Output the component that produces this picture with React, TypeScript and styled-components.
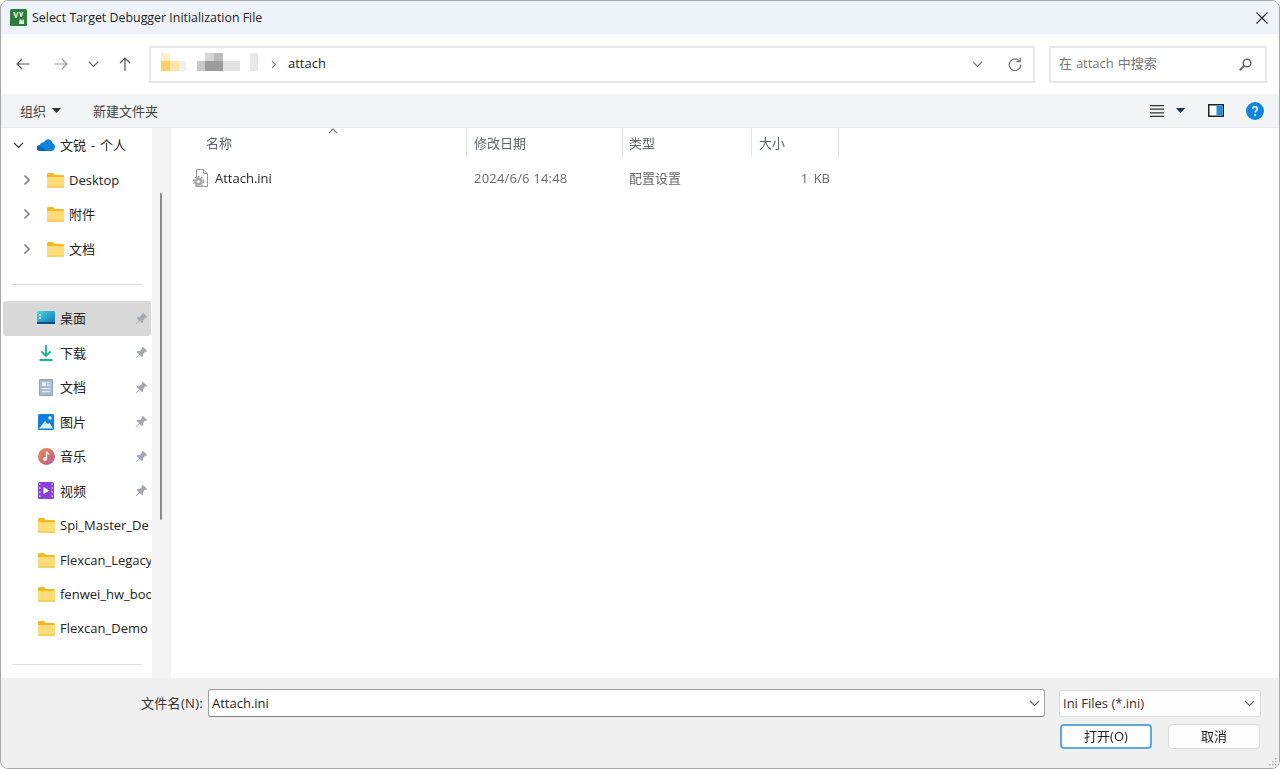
import React from "react";
import styled, { createGlobalStyle } from "styled-components";

const Global = createGlobalStyle`
  html, body { margin: 0; padding: 0; background: #fff; }
  body { font-family: "Open Sans", "Noto Sans CJK SC", sans-serif; font-size: 13px; overflow: hidden; }
  * { box-sizing: border-box; }
`;

const Win = styled.div`
  width: 1280px; height: 769px; display: flex; flex-direction: column;
  border: 1px solid #a8a8a8; border-radius: 8px; overflow: hidden; background: #fff;
  filter: blur(0.4px);
`;
const TitleBar = styled.div`
  height: 33px; flex: none; display: flex; align-items: center; background: #eef3f9;
  padding: 0 9px; gap: 5px; color: #1c1c1c; font-size: 12.4px;
`;
const TitleText = styled.span`flex: 1; white-space: nowrap;`;
const NavBar = styled.div`
  height: 60px; flex: none; display: flex; align-items: center; padding: 0 12px 0 0; background: #fff;
`;
const NavBtn = styled.div<{ $w: number }>`
  width: ${p => p.$w}px; flex: none; display: flex; justify-content: center; align-items: center;
`;
const Address = styled.div`
  width: 886px; height: 37px; margin-left: 10px; flex: none; display: flex; align-items: center;
  border: 2px solid #e8e8e8; background: #fff; color: #1c1c1c; font-size: 13px;
`;
const Crumb = styled.span`margin-left: 11px; flex: 1; padding-bottom: 3px;`;
const Sep = styled.span`margin-left: 8px; display: flex;`;
const AddrIcon = styled.span<{ $mr: number }>`display: flex; margin-right: ${p => p.$mr}px;`;
const Search = styled.div`
  width: 218px; height: 37px; margin-left: 14px; flex: none; display: flex; align-items: center; justify-content: space-between;
  border: 2px solid #e8e8e8; padding: 0 13px 0 8px; color: #777; font-size: 13px;
`;
const SearchText = styled.span`padding-bottom: 3px; word-spacing: .5px;`;
const Command = styled.div`
  height: 34px; flex: none; display: flex; align-items: center; background: #f3f4f6;
  border-bottom: 1px solid #e9e9e9; padding: 0 15px 0 19px; color: #444; font-size: 13px;
`;
const CmdGroup = styled.div`display: flex; align-items: center; gap: 6px; padding-bottom: 1px;`;
const CmdItem = styled.span<{ $ml?: number }>`margin-left: ${p => p.$ml ?? 0}px; display: flex;`;
const Spacer = styled.div`flex: 1;`;
const Main = styled.div`height: 550px; flex: none; display: flex; background: #fff;`;
const Side = styled.nav`width: 151px; flex: none; overflow: hidden; background: #fff;`;
const Row = styled.div<{ $sel?: boolean; $pl: number }>`
  height: 34.45px; width: 148px; margin-left: 2px; display: flex; align-items: center; position: relative;
  padding-left: ${p => p.$pl}px; border-radius: 3px; background: ${p => (p.$sel ? "#d9d9d9" : "transparent")};
  color: #222; font-size: 13px; white-space: nowrap; overflow: hidden;
`;
const Chev = styled.span<{ $w: number }>`width: ${p => p.$w}px; flex: none; display: flex; align-items: center;`;
const IconWrap = styled.span<{ $mr: number }>`display: flex; flex: none; margin-right: ${p => p.$mr}px;`;
const Label = styled.span<{ $latin?: boolean }>`
  flex: 1; overflow: hidden; word-spacing: 1.500px; padding-bottom: ${p => (p.$latin ? 0 : 1)}px;
`;
const PinWrap = styled.span`display: flex; flex: none; margin-right: 3px;`;
const IconSlot = styled.span`width: 18px; display: flex; justify-content: center;`;
const Divider = styled.div<{ $h: number; $mt?: number; $pt?: number }>`
  height: ${p => p.$h}px; margin-top: ${p => p.$mt ?? 0}px; padding: ${p => p.$pt ?? 0}px 10px 0 11px; display: flex; align-items: center;
  &::after { content: ""; flex: 1; height: 1px; background: #dedede; }
`;
const Track = styled.div`width: 18px; flex: none; background: #f3f3f3; display: flex; justify-content: center;`;
const Thumb = styled.div`width: 2px; height: 327px; margin-top: 65px; background: #8b8b8b; border-radius: 1px;`;
const List = styled.section`flex: 1; position: relative; border-left: 1px solid #f4f4f4;`;
const Cols = `296px 156px 129px 87px`;
const Head = styled.div`display: grid; grid-template-columns: ${Cols}; height: 30px; color: #5c6570; font-size: 13px;`;
const HeadCell = styled.div<{ $pl: number }>`
  display: flex; align-items: center; padding: 0 0 2px ${p => p.$pl}px; border-right: 1px solid #e5e5e5;
`;
const SortCaret = styled.span`position: absolute; left: 157px; top: 0; display: flex;`;
const FileRow = styled.div`display: grid; grid-template-columns: ${Cols}; height: 40px; align-items: center; color: #6b6b6b; font-size: 13px;`;
const NameCell = styled.div`display: flex; align-items: center; padding-left: 22px; color: #262626; gap: 6px;`;
const Cell = styled.div<{ $pl: number }>`padding-left: ${p => p.$pl}px; white-space: nowrap; letter-spacing: .2px;`;
const TypeCell = styled(Cell)`padding-bottom: 2px; letter-spacing: 0;`;
const SizeCell = styled.div`text-align: right; padding-right: 9px; white-space: nowrap; word-spacing: 2px;`;
const Footer = styled.footer`flex: 1; background: #f0f0f0; position: relative; padding: 11px 18px 0 0; display: flex; flex-direction: column; gap: 7px;`;
const FRow = styled.div`display: flex; justify-content: flex-end; align-items: center;`;
const FLabel = styled.label`color: #333; font-size: 13px; margin-right: 5px; letter-spacing: .3px; padding-bottom: 2px;`;
const Input = styled.div`
  width: 837px; height: 28px; background: #fff; border: 1px solid #a0a0a0; border-bottom-color: #7c7c7c; border-radius: 3px;
  display: flex; align-items: center; justify-content: space-between; padding: 0 4px 0 3px; color: #1c1c1c; font-size: 13px;
`;
const Combo = styled.div`
  width: 202px; height: 27px; margin-left: 14px; background: #fdfdfd; border: 1px solid #dcdcdc; border-radius: 3px;
  display: flex; align-items: center; justify-content: space-between; padding: 0 5px 0 3px; color: #333; font-size: 13px;
`;
const Button = styled.button<{ $primary?: boolean }>`
  width: 92px; height: 25px; margin-left: ${p => (p.$primary ? 0 : 16)}px; background: #fdfdfd; padding: 0 0 2px;
  border: ${p => (p.$primary ? "2px solid #5fa8de" : "1px solid #dadada")}; border-radius: 4px;
  color: #1c1c1c; font: 13px "Open Sans", "Noto Sans CJK SC", sans-serif;
`;
const Buttons = styled(FRow)`padding-right: 1px;`;
const Grip = styled.span`position: absolute; right: 1px; bottom: 1px; display: flex;`;

const Folder = ({ w = 18 }: { w?: number }) => (
  <svg width={w} height={w - 2} viewBox="0 0 18 16">
    <path d="M1 2.500C1 1.700 1.600 1 2.500 1H7l2 2h7.500c.8 0 1.500.7 1.500 1.500V6H1z" fill="#f5b81f" />
    <path d="M1 5h17v9.500c0 .8-.7 1.500-1.500 1.500h-14C1.700 16 1 15.300 1 14.500z" fill="#ffdc78" />
    <path d="M1 14.500V15.500h17v-1z" fill="#f2c14e" />
  </svg>
);
const Pin = () => (
  <svg width="13" height="13" viewBox="0 0 13 13" fill="#a3a9ae">
    <path d="M8 .8l4.200 4.200-1 .9-.8-.3-2.300 2.300.1 2.200-1.100 1.100-2.400-2.400L1.200 12.300l-.6-.5 3.400-3.500L1.600 5.900l1.100-1.100 2.200.1L7.200 2.600 6.900 1.800z" />
  </svg>
);
const ChevR = ({ s = 1 }: { s?: number }) => (
  <svg width={8 * s} height={12 * s} viewBox="0 0 8 12" fill="none" stroke="#7f7f7f" strokeWidth="1.600"><path d="M1.500 1.500L6 6l-4.500 4.500" /></svg>
);
const ChevD = ({ c = "#3a3a3a", w = 11 }: { c?: string; w?: number }) => (
  <svg width={w} height="7" viewBox="0 0 11 7" fill="none" stroke={c} strokeWidth="1.200"><path d="M1 1l4.500 4.500L10 1" /></svg>
);
const Cloud = () => (
  <svg width="18" height="12" viewBox="0 0 18 12">
    <path d="M3.500 12C1.500 12 0 10.700 0 9c0-1.600 1.200-2.900 2.900-3.100C3.500 4 5.200 3 7 3.200 8.200 1 10 0 11.500.2c2 .2 3.500 1.700 3.700 3.800C16.800 4.400 18 5.700 18 7.500 18 10 16.500 12 14.500 12z" fill="#1081d8" />
    <path d="M3.500 12C1.500 12 0 10.700 0 9c0-1 .4-1.900 1.200-2.400L11 12z" fill="#0a64b8" />
  </svg>
);
const Desk = () => (
  <svg width="18" height="14" viewBox="0 0 18 14">
    <defs><linearGradient id="dk" x1="0" y1="0" x2="1" y2="1"><stop offset="0" stopColor="#48d6e8" /><stop offset="1" stopColor="#0f6fae" /></linearGradient></defs>
    <rect x="0" y="0" width="18" height="13" rx="1.500" fill="url(#dk)" />
    <rect x="0" y="11" width="18" height="2" fill="#0b4f86" />
    <rect x="2" y="3" width="2" height="1.500" fill="#fff" /><rect x="2" y="6" width="2" height="1.500" fill="#fff" />
  </svg>
);
const Down = () => (
  <svg width="14" height="16" viewBox="0 0 14 16" fill="none" stroke="#13b58c" strokeWidth="1.800"><path d="M7 0v11M2.500 6.500L7 11l4.500-4.500M0.500 15h13" /></svg>
);
const Doc = () => (
  <svg width="14" height="17" viewBox="0 0 14 17">
    <rect width="14" height="17" rx="1" fill="#8ea4bf" /><rect x="1" y="1" width="12" height="15" fill="#a9bad0" />
    <rect x="3" y="3" width="4" height="4" fill="#e8eef5" /><rect x="8" y="3" width="3.500" height="1.200" fill="#e8eef5" /><rect x="8" y="5.500" width="3.500" height="1.200" fill="#e8eef5" />
    <rect x="3" y="9" width="8.500" height="1.200" fill="#e8eef5" /><rect x="3" y="12" width="8.500" height="1.200" fill="#e8eef5" />
  </svg>
);
const Pic = () => (
  <svg width="16" height="16" viewBox="0 0 16 16">
    <rect width="16" height="16" rx="1.500" fill="#0d7fdc" />
    <circle cx="12" cy="4" r="1.700" fill="#fff" />
    <path d="M1 14.500L7 7l3 3 1.500-1.200L15 14.500z" fill="#dff0fd" />
  </svg>
);
const Music = () => (
  <svg width="17" height="17" viewBox="0 0 17 17">
    <defs><linearGradient id="mu" x1="0" y1="0" x2="1" y2="1"><stop offset="0" stopColor="#f18b47" /><stop offset="1" stopColor="#b8589e" /></linearGradient></defs>
    <circle cx="8.500" cy="8.500" r="8.500" fill="url(#mu)" />
    <path d="M8.500 3.500v7" stroke="#fff" strokeWidth="1.300" /><path d="M8.500 3.500c.5 1.800 2.300 1.800 2.800 3" stroke="#fff" strokeWidth="1.100" fill="none" />
    <circle cx="7" cy="11" r="1.900" fill="#fff" />
  </svg>
);
const Video = () => (
  <svg width="16" height="17" viewBox="0 0 16 17">
    <rect width="16" height="17" rx="1.500" fill="#8b3fd9" />
    <path d="M5.500 5v7l6-3.500z" fill="#fff" />
    {[2, 6, 10, 14].map(y => <rect key={y} x="1" y={y - .7} width="1.500" height="1.500" fill="#e3cdfa" />)}
    {[2, 6, 10, 14].map(y => <rect key={y} x="13.500" y={y - .7} width="1.500" height="1.500" fill="#e3cdfa" />)}
  </svg>
);
const AppLogo = () => (
  <svg width="17" height="17" viewBox="0 0 17 17">
    <rect width="17" height="17" rx="1.500" fill="#2f7d3a" />
    <path d="M3 3h2l1 4 1-4h1.500L6.800 9H5.300zM9 3h1.500l.7 3 .7-3h1.500l-1.500 5h-1.400z" fill="#d9ecd9" />
    <path d="M9.500 10.500h2l.5 3 .5-3H14v4.500h-5z" fill="#eaf5ea" />
  </svg>
);
const IniIcon = () => (
  <svg width="16" height="18" viewBox="0 0 16 18">
    <path d="M3.500.5h7l4 4v13h-11z" fill="#fff" stroke="#9c9c9c" />
    <path d="M10.500.5v4h4" fill="#eee" stroke="#9c9c9c" />
    <circle cx="5.500" cy="12.500" r="4.300" fill="#a9a9a9" />
    <circle cx="5.500" cy="12.500" r="5" fill="none" stroke="#9a9a9a" strokeWidth="1.200" strokeDasharray="1.600 1.600" />
    <circle cx="5.500" cy="12.500" r="1.600" fill="#f0f0f0" />
  </svg>
);
const ArrowSvg = styled.svg<{ $flip?: boolean }>`transform: ${p => (p.$flip ? "scaleX(-1)" : "none")};`;
const Arrow = ({ c, flip }: { c: string; flip?: boolean }) => (
  <ArrowSvg $flip={flip} width="14" height="12" viewBox="0 0 14 12" fill="none" stroke={c} strokeWidth="1.200">
    <path d="M13.500 6H1M6 1L1 6l5 5" />
  </ArrowSvg>
);
const Up = () => (
  <svg width="12" height="14" viewBox="0 0 12 14" fill="none" stroke="#555" strokeWidth="1.200"><path d="M6 14V1M1 6l5-5 5 5" /></svg>
);
const MosaicSvg = styled.svg`flex: none;`;
const Mosaic = () => (
  <MosaicSvg width="112" height="33" viewBox="1 0 112 33">
    <rect x="11" y="5" width="9" height="8" fill="#ffefc8" />
    <rect x="11" y="13" width="9" height="10" fill="#ffd062" />
    <rect x="20" y="13" width="9" height="10" fill="#ffe6a8" />
    <rect x="29" y="13" width="7" height="10" fill="#efefef" />
    <rect x="47" y="13" width="8" height="10" fill="#c8c8c8" />
    <rect x="55" y="5" width="9" height="8" fill="#d6d6d6" />
    <rect x="64" y="5" width="9" height="8" fill="#bcbcbc" />
    <rect x="55" y="13" width="18" height="10" fill="#9c9c9c" />
    <rect x="73" y="13" width="17" height="10" fill="#e2e2e2" />
    <rect x="100" y="5" width="8" height="18" fill="#e8e8e8" />
  </MosaicSvg>
);
const Refresh = () => (
  <svg width="14" height="14" viewBox="0 0 14 14" fill="none" stroke="#767676" strokeWidth="1.200">
    <path d="M11.800 4.500A5.800 5.800 0 1 0 12.800 7.500" /><path d="M12.300 .8v3.900H8.400" />
  </svg>
);
const Mag = () => (
  <svg width="13" height="13" viewBox="0 0 13 13" fill="none" stroke="#666" strokeWidth="1.500">
    <circle cx="8" cy="5" r="3.800" /><path d="M5.200 7.800L.8 12.200" strokeWidth="2" />
  </svg>
);
const Lines = () => (
  <svg width="14" height="12" viewBox="0 0 14 12" stroke="#333" strokeWidth="1.200"><path d="M0 .6h14M0 4.200h14M0 7.800h14M0 11.400h14" /></svg>
);
const Caret = ({ c = "#333", w = 9 }: { c?: string; w?: number }) => (
  <svg width={w} height="5" viewBox="0 0 9 5" fill={c}><path d="M0 0h9L4.500 5z" /></svg>
);
const PaneIcon = () => (
  <svg width="16" height="13" viewBox="0 0 16 13">
    <rect x=".75" y=".75" width="14.500" height="11.500" fill="#fff" stroke="#222" strokeWidth="1.500" />
    <rect x="8.500" y="1.500" width="6" height="10" fill="#1b8fe3" />
  </svg>
);
const Help = () => (
  <svg width="18" height="18" viewBox="0 0 18 18">
    <circle cx="9" cy="9" r="9" fill="#0f87e0" />
    <path d="M6.700 7c0-1.500 1-2.300 2.400-2.300S11.400 5.500 11.400 6.800c0 1.800-2.200 1.800-2.200 3.700" fill="none" stroke="#fff" strokeWidth="1.600" />
    <circle cx="9.200" cy="13" r="1" fill="#fff" />
  </svg>
);
const Close = () => (
  <svg width="12" height="12" viewBox="0 0 12 12" stroke="#1a1a1a" strokeWidth="1.100"><path d="M.5.5l11 11M11.500.5l-11 11" /></svg>
);
const GripIcon = () => (
  <svg width="10" height="10" viewBox="0 0 10 10" fill="#b5b5b5">
    {[[7, 1], [4, 4], [7, 4], [1, 7], [4, 7], [7, 7]].map(([x, y]) => <rect key={`${x}${y}`} x={x} y={y} width="1.500" height="1.500" />)}
  </svg>
);

const tree = ["Desktop", "附件", "文档"];
const pinned: [string, React.ReactNode][] = [
  ["桌面", <Desk />], ["下载", <Down />], ["文档", <Doc />], ["图片", <Pic />], ["音乐", <Music />], ["视频", <Video />],
];
const recent = ["Spi_Master_De", "Flexcan_Legacy", "fenwei_hw_boo", "Flexcan_Demo"];

export default function App() {
  return (
    <>
      <Global />
      <Win>
        <TitleBar>
          <AppLogo />
          <TitleText>Select Target Debugger Initialization File</TitleText>
          <AddrIcon $mr={2}><Close /></AddrIcon>
        </TitleBar>
        <NavBar>
          <NavBtn $w={44}><Arrow c="#555" /></NavBtn>
          <NavBtn $w={31}><Arrow c="#9a9a9a" flip /></NavBtn>
          <NavBtn $w={35}><ChevD c="#666" /></NavBtn>
          <NavBtn $w={28}><Up /></NavBtn>
          <Address>
            <Mosaic />
            <Sep><ChevR s={0.75} /></Sep>
            <Crumb>attach</Crumb>
            <AddrIcon $mr={25}><ChevD c="#777" /></AddrIcon>
            <AddrIcon $mr={11}><Refresh /></AddrIcon>
          </Address>
          <Search>
            <SearchText>在 attach 中搜索</SearchText>
            <Mag />
          </Search>
        </NavBar>
        <Command>
          <CmdGroup>组织<Caret /></CmdGroup>
          <CmdItem $ml={32}>新建文件夹</CmdItem>
          <Spacer />
          <Lines />
          <CmdItem $ml={12}><Caret c="#1f3556" /></CmdItem>
          <CmdItem $ml={23}><PaneIcon /></CmdItem>
          <CmdItem $ml={22}><Help /></CmdItem>
        </Command>
        <Main>
          <Side>
            <Row $pl={10}>
              <Chev $w={24}><ChevD /></Chev>
              <IconWrap $mr={5}><Cloud /></IconWrap>
              <Label>文锐 - 个人</Label>
            </Row>
            {tree.map(t => (
              <Row key={t} $pl={20}>
                <Chev $w={23}><ChevR /></Chev>
                <IconWrap $mr={5}><Folder /></IconWrap>
                <Label $latin={t === "Desktop"}>{t}</Label>
              </Row>
            ))}
            <Divider $h={35.500} $pt={2} />
            {pinned.map(([t, icon], i) => (
              <Row key={t} $sel={i === 0} $pl={34}>
                <IconWrap $mr={5}><IconSlot>{icon}</IconSlot></IconWrap>
                <Label>{t}</Label>
                <PinWrap><Pin /></PinWrap>
              </Row>
            ))}
            {recent.map(t => (
              <Row key={t} $pl={34}>
                <IconWrap $mr={5}><Folder /></IconWrap>
                <Label $latin>{t}</Label>
              </Row>
            ))}
            <Divider $h={2} $mt={18} />
          </Side>
          <Track><Thumb /></Track>
          <List>
            <SortCaret>
              <svg width="10" height="6" viewBox="0 0 10 6" fill="none" stroke="#777" strokeWidth="1.100"><path d="M1 5l4-4 4 4" /></svg>
            </SortCaret>
            <Head>
              <HeadCell $pl={35}>名称</HeadCell>
              <HeadCell $pl={7}>修改日期</HeadCell>
              <HeadCell $pl={6}>类型</HeadCell>
              <HeadCell $pl={7}>大小</HeadCell>
            </Head>
            <FileRow>
              <NameCell><IniIcon />Attach.ini</NameCell>
              <Cell $pl={7}>2024/6/6 14:48</Cell>
              <TypeCell $pl={6}>配置设置</TypeCell>
              <SizeCell>1 KB</SizeCell>
            </FileRow>
          </List>
        </Main>
        <Footer>
          <FRow>
            <FLabel>文件名(N):</FLabel>
            <Input>Attach.ini<ChevD c="#666" /></Input>
            <Combo>Ini Files (*.ini)<ChevD c="#666" /></Combo>
          </FRow>
          <Buttons>
            <Button $primary>打开(O)</Button>
            <Button>取消</Button>
          </Buttons>
          <Grip><GripIcon /></Grip>
        </Footer>
      </Win>
    </>
  );
}
